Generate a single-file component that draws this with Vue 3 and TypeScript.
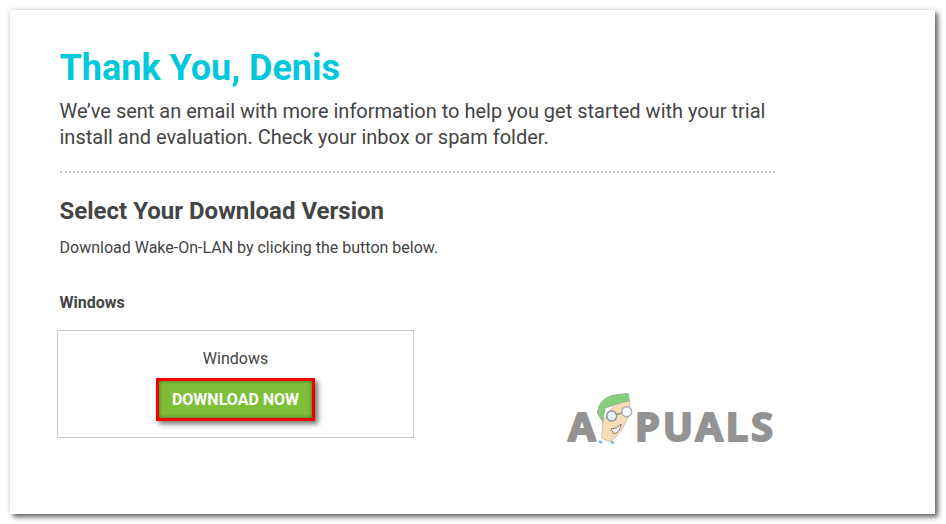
<script setup lang="ts">
const title = 'Thank You, Denis'
const platform = 'Windows'
</script>

<template>
  <div class="page">
    <main class="card">
      <h1 class="title">{{ title }}</h1>
      <p class="lead">
        We’ve sent an email with more information to help you get started with your trial
        install and evaluation. Check your inbox or spam folder.
      </p>
      <hr class="divider" />
      <h2 class="subtitle">Select Your Download Version</h2>
      <p class="hint">Download Wake-On-LAN by clicking the button below.</p>
      <h3 class="platform">{{ platform }}</h3>
      <div class="box">
        <span class="box-name">{{ platform }}</span>
        <a class="btn">DOWNLOAD NOW</a>
      </div>

      <!-- watermark over the page -->
      <svg class="logo" width="216" height="72" viewBox="0 0 216 72">
        <g class="logo-text">
          <text x="1" y="50" font-size="40">A</text>
          <text x="68" y="50" font-size="40" textLength="138">PUALS</text>
        </g>
        <path d="M35.7 30 L34.7 47.3 L43 50.7 Q50 46 54.7 39 L61.3 25.7 L63 9 L48 13 Z" fill="#f8dcb8" stroke="#c9b8a2" stroke-width="0.8" />
        <path d="M30.3 22.3 Q31 15 34.7 10.7 Q39 6 46.3 4 L61.3 2.3 L62.3 9.7 L49.7 13 L38 17.3 L35.7 30.7 Z" fill="#84d07c" stroke="#9aa894" stroke-width="0.8" />
        <circle cx="44.7" cy="25" r="5" fill="#e4f2f8" stroke="#8a9498" stroke-width="1.5" />
        <circle cx="59.7" cy="20.7" r="5" fill="#fafcfd" stroke="#a8b0b3" stroke-width="1.5" />
        <path d="M49.5 23.5 L54.8 22" stroke="#8a9498" stroke-width="1.5" />
        <path d="M44 38 Q50 38 54 33 Q54 40 47 43 Z" fill="#fff" stroke="#77665c" stroke-width="0.9" />
        <path d="M32 50 L35 52 M44 51 L47 52" stroke="#72bfdd" stroke-width="2.5" />
      </svg>
    </main>
  </div>
</template>

<style>
html,
body {
  margin: 0;
  background: #fff;
}
</style>

<style scoped>
.page {
  width: 946px;
  height: 524px;
  box-sizing: border-box;
  padding: 10px 11px 10px 10px;
  overflow: hidden;
  font-family: Roboto, "Liberation Sans", sans-serif;
  color: #444;
}
.card {
  position: relative;
  box-sizing: border-box;
  height: 504px;
  padding: 33px 160px 0 49.5px;
  background: #fff;
  box-shadow:
    0 0 5px rgba(0, 0, 0, 0.12),
    3px 3px 5px rgba(0, 0, 0, 0.6);
}
.title {
  margin: 0;
  font-size: 36px;
  line-height: 50px;
  font-weight: 700;
  color: #00c8dc;
}
.lead {
  margin: 5px 0 0;
  width: 720px;
  font-size: 20px;
  line-height: 26px;
}
.divider {
  margin: 21px 0 0;
  border: 0;
  border-top: 2px dotted #c4c4c4;
}
.subtitle {
  margin: 22px 0 0;
  font-size: 24px;
  line-height: 32px;
  font-weight: 700;
}
.hint {
  margin: 9px 0 0;
  font-size: 16px;
  line-height: 24px;
}
.platform {
  margin: 31px 0 0;
  font-size: 16px;
  line-height: 24px;
  font-weight: 700;
}
.box {
  box-sizing: border-box;
  width: 357px;
  height: 108px;
  margin: 15px 0 0 -2.5px;
  padding-top: 16px;
  border: 1px solid #c8c8c8;
  display: flex;
  flex-direction: column;
  align-items: center;
}
.box-name {
  font-size: 16px;
  line-height: 24px;
}
.btn {
  box-sizing: border-box;
  width: 159px;
  height: 43px;
  margin-top: 7px;
  display: flex;
  align-items: center;
  justify-content: center;
  border: 3px solid #f50000;
  background: #7fbf38;
  color: #fff;
  font-size: 16px;
  font-weight: 700;
  box-shadow:
    inset 0 0 4px rgba(30, 80, 20, 0.7),
    3px 3px 5px rgba(0, 0, 0, 0.55);
}
.logo {
  position: absolute;
  left: 557px;
  top: 381px;
}
.logo-text {
  font-family: "Noto Sans", sans-serif;
  font-weight: 700;
  fill: #939393;
  stroke: #939393;
  stroke-width: 2;
  stroke-linejoin: round;
}
</style>
